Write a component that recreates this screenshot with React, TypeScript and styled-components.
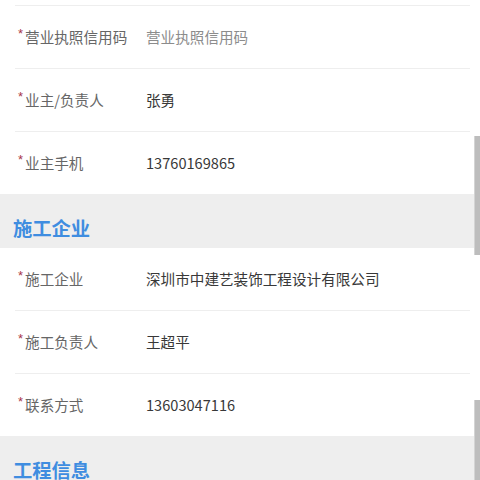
import React from 'react';
import styled, { createGlobalStyle } from 'styled-components';

const GlobalStyle = createGlobalStyle`
  html, body {
    margin: 0;
    padding: 0;
    background: #ffffff;
  }
  body {
    font-family: "Noto Sans CJK SC", "Noto Sans", sans-serif;
    overflow: hidden;
  }
`;

const Page = styled.div`
  position: relative;
  width: 480px;
  height: 480px;
  overflow: hidden;
  background: #ffffff;
  padding-top: 5px;
  box-sizing: border-box;
`;

const Section = styled.div`
  display: flex;
  flex-direction: column;
`;

const SectionHeader = styled.div`
  display: flex;
  align-items: flex-start;
  height: 54px;
  padding: 21px 0 0 13px;
  box-sizing: border-box;
  background: #eeeeee;
  color: #3f8de0;
  font-size: 19.3px;
  font-weight: bold;
  line-height: 26px;
`;

const Row = styled.div<{ $divider?: boolean }>`
  display: flex;
  align-items: center;
  height: 62px;
  margin: 0 10px 0 15px;
  padding-left: 3px;
  border-top: ${({ $divider }) => ($divider ? '1px solid #eeeeee' : 'none')};
  font-size: 14.6px;
`;

const Label = styled.div`
  display: flex;
  align-items: flex-start;
  width: 128px;
  flex-shrink: 0;
  color: #666666;
  line-height: 20px;
`;

const Star = styled.span`
  color: #a8364a;
  font-size: 13px;
  line-height: 14px;
  margin-right: 2px;
  font-family: "Liberation Sans", sans-serif;
`;

const Value = styled.div<{ $placeholder?: boolean }>`
  color: ${({ $placeholder }) => ($placeholder ? '#8c8c8c' : '#383838')};
  line-height: 20px;
  white-space: nowrap;
`;

const ScrollThumb = styled.div<{ $top: number; $height: number }>`
  position: absolute;
  right: 0;
  top: ${({ $top }) => $top}px;
  width: 5px;
  height: ${({ $height }) => $height}px;
  background: #bdbdbd;
  border-left: 1px solid #d4d4d4;
`;

type Field = { label: string; value: string; placeholder?: boolean };

const owner: Field[] = [
  { label: '营业执照信用码', value: '营业执照信用码', placeholder: true },
  { label: '业主/负责人', value: '张勇' },
  { label: '业主手机', value: '13760169865' },
];

const builder: Field[] = [
  { label: '施工企业', value: '深圳市中建艺装饰工程设计有限公司' },
  { label: '施工负责人', value: '王超平' },
  { label: '联系方式', value: '13603047116' },
];

const renderRows = (fields: Field[], topDivider: boolean) =>
  fields.map((f, i) => (
    <Row key={f.label} $divider={i > 0 || topDivider}>
      <Label>
        <Star>*</Star>
        {f.label}
      </Label>
      <Value $placeholder={f.placeholder}>{f.value}</Value>
    </Row>
  ));

const App = () => (
  <>
    <GlobalStyle />
    <Page>
      <Section>{renderRows(owner, true)}</Section>
      <SectionHeader>施工企业</SectionHeader>
      <Section>{renderRows(builder, false)}</Section>
      <SectionHeader>工程信息</SectionHeader>
      <ScrollThumb $top={136} $height={119} />
      <ScrollThumb $top={400} $height={80} />
    </Page>
  </>
);

export default App;
